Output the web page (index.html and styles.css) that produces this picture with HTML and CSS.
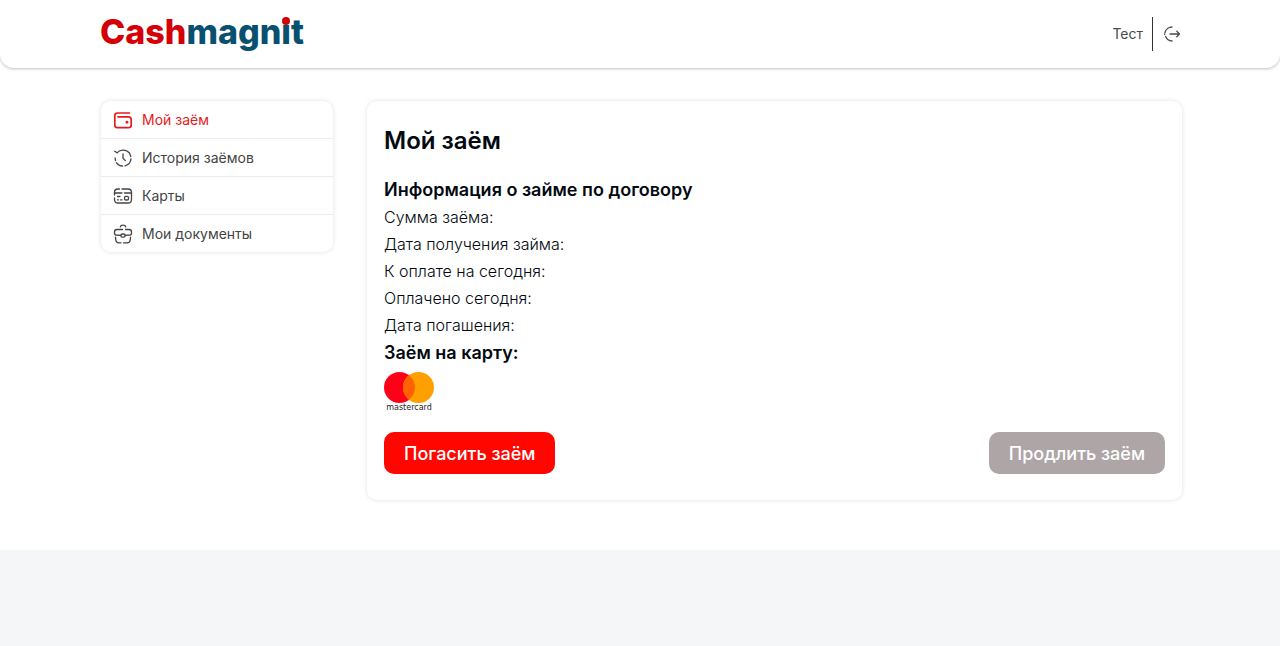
FILE: index.html
```html
<!DOCTYPE html>
<html lang="ru">
  <head>
    <meta charset="utf-8">
    <meta name="viewport" content="width=device-width, initial-scale=1">
    <title>Мой заём</title>
    <link rel="stylesheet" href="styles.css">
  </head>
  <body>
    <header class="header">
      <a class="logo" href="#"><span class="logo-red">Cash</span>magn<span class="logo-i">i</span>t</a>
      <div class="user">
        <span class="user-name">Тест</span>
        <a class="logout" href="#" aria-label="Выйти">
          <svg width="18" height="18" viewBox="0 0 18 18" fill="none" stroke="currentColor" stroke-width="1.3" stroke-linecap="round" stroke-linejoin="round">
            <path d="M7 9h9.500M13.800 6.300l2.700 2.700-2.700 2.700" />
            <path d="M9 2C6 2 2.800 4 2 7.500M2.600 11.500C3.800 14.300 6 15.800 9 16M1.700 9v.5" />
          </svg>
        </a>
      </div>
    </header>

    <main class="content">
      <nav class="menu">
        <a class="menu-item active" href="#">
          <svg width="20" height="20" viewBox="0 0 20 20" fill="none" stroke="currentColor" stroke-width="1.7" stroke-linecap="round" stroke-linejoin="round">
            <path d="M16.500 3H4.500C2.700 3 1.800 4 1.800 5.500v9.500c0 1.700 1 2.700 2.700 2.700h11c1.700 0 2.700-1 2.700-2.700V9.500c0-1.700-1-2.700-2.700-2.700H5" />
            <circle cx="14" cy="12.200" r="0.600" fill="currentColor" />
          </svg>
          Мой заём
        </a>
        <a class="menu-item" href="#">
          <svg width="20" height="20" viewBox="0 0 20 20" fill="none" stroke="currentColor" stroke-width="1.3" stroke-linecap="round" stroke-linejoin="round">
            <path d="M4.200 4.600A8 8 0 0 1 17.800 8.500M18 10.800A8 8 0 0 1 12 17.800M9.500 18A8 8 0 0 1 3.500 14.800M2.500 12.500L2.100 10" />
            <path d="M1.700 3.300l2.300 1.500M10 6v4.300l2.300 2.300" />
          </svg>
          История заёмов
        </a>
        <a class="menu-item" href="#">
          <svg width="20" height="20" viewBox="0 0 20 20" fill="none" stroke="currentColor" stroke-width="1.3" stroke-linecap="round" stroke-linejoin="round">
            <path d="M1.500 9V6.500C1.500 4 3 3 5 3h1.500M9 3h6c2 0 3.500 1 3.500 3.500v7c0 2.500-1.500 3.500-3.500 3.500H5c-2 0-3.500-1-3.500-3.500V12" />
            <path d="M1.500 7h7.500M11.500 7h7M4.500 10.500h2.500M4.500 13.800h1M7.500 13.800h1.500" />
            <rect x="11.500" y="10.300" width="4" height="3.700" rx="1.300" />
          </svg>
          Карты
        </a>
        <a class="menu-item" href="#">
          <svg width="20" height="20" viewBox="0 0 20 20" fill="none" stroke="currentColor" stroke-width="1.3" stroke-linecap="round" stroke-linejoin="round">
            <path d="M7.300 2.800C7.500 1.600 8.500 1.200 10 1.200s2.500.4 2.700 1.600" />
            <path d="M9.500 5.500H4C2.300 5.500 1.500 6.300 1.500 7.800v1.400c0 1 .5 1.600 1.500 1.800l4.800.4M12.200 11.400l4.800-.4c1-.2 1.500-.8 1.500-1.800V7.800c0-1.500-.8-2.300-2.500-2.300h-3.500" />
            <path d="M2.500 13.200l.3 2.800c.2 2 1.200 2.800 3.200 2.800h2M17.500 13.200l-.3 2.800c-.2 2-1.200 2.800-3.200 2.800h-3.500" />
            <rect x="7.800" y="10" width="4.400" height="3.200" rx="1.600" />
          </svg>
          Мои документы
        </a>
      </nav>

      <section class="card">
        <h1>Мой заём</h1>
        <h2>Информация о займе по договору</h2>
        <p>Сумма заёма:</p>
        <p>Дата получения займа:</p>
        <p>К оплате на сегодня:</p>
        <p>Оплачено сегодня:</p>
        <p>Дата погашения:</p>
        <h2>Заём на карту:</h2>
        <svg class="mastercard" width="50" height="40" viewBox="0 0 50 40" role="img" aria-label="mastercard">
          <circle cx="15.500" cy="15.500" r="15.500" fill="#ff0019" />
          <circle cx="34.500" cy="15.500" r="15.500" fill="#ff9f00" />
          <path d="M25 3.250a15.500 15.500 0 0 1 0 24.500a15.500 15.500 0 0 1 0-24.500z" fill="#ff6200" />
          <text class="mastercard-text" x="25" y="38" text-anchor="middle">mastercard</text>
        </svg>
        <div class="buttons">
          <button class="btn" type="button">Погасить заём</button>
          <button class="btn btn-gray" type="button">Продлить заём</button>
        </div>
      </section>
    </main>

    <footer class="footer"></footer>
  </body>
</html>
```

FILE: styles.css
```css
* {
  box-sizing: border-box;
}
body {
  margin: 0;
  min-height: 100vh;
  display: flex;
  flex-direction: column;
  font-family: Inter, "Open Sans", sans-serif;
  color: #02090f;
  background: #fff;
}
a {
  color: inherit;
  text-decoration: none;
}
.header {
  display: flex;
  justify-content: space-between;
  align-items: center;
  padding: 12px 99px 12px 100px;
  border-radius: 0 0 14px 14px;
  background: #fff;
  box-shadow: 0 1px 3px rgba(0, 0, 0, 0.25);
}
.logo {
  padding-bottom: 4px;
  font-size: 34px;
  line-height: 40px;
  font-weight: 800;
  color: #07506f;
}
.logo-red {
  color: #d50007;
}
/* red dot over the letter i */
.logo-i {
  position: relative;
}
.logo-i::before {
  content: "";
  position: absolute;
  left: 1px;
  top: 6px;
  width: 8px;
  height: 8px;
  border-radius: 50%;
  background: #d50007;
}
.user {
  display: flex;
  align-items: center;
  font-size: 14px;
  color: #4a4a4a;
}
.user-name {
  line-height: 34px;
  padding-right: 9px;
  border-right: 1px solid #333;
}
.logout {
  display: flex;
  padding-left: 10px;
}
.content {
  display: grid;
  grid-template-columns: 232px 1fr;
  align-items: start;
  gap: 34px;
  padding: 33px 98px 50px 101px;
}
.menu {
  border-radius: 10px;
  box-shadow: 0 0 5px rgba(0, 0, 0, 0.12);
}
.menu-item {
  display: flex;
  align-items: center;
  gap: 9px;
  height: 38px;
  padding: 0 12px;
  font-size: 14px;
  font-weight: 400;
  color: #444;
  border-bottom: 1px solid #ececec;
}
.menu-item:last-child {
  height: 37px;
  border-bottom: none;
}
.menu-item.active {
  color: #e8191c;
}
.card {
  padding: 25px 17px 26px;
  border-radius: 10px;
  box-shadow: 0 0 5px rgba(0, 0, 0, 0.12);
}
h1 {
  margin: 0 0 20px;
  font-size: 24px;
  line-height: 30px;
  font-weight: 600;
}
h2 {
  margin: 0;
  font-size: 18px;
  line-height: 28px;
  font-weight: 600;
}
p {
  margin: 0;
  font-size: 16px;
  line-height: 27px;
  font-weight: 300;
}
.mastercard {
  display: block;
  margin-top: 5px;
}
.mastercard-text {
  font-family: "DejaVu Sans", sans-serif;
  font-size: 8px;
  fill: #222;
}
.buttons {
  display: flex;
  justify-content: space-between;
  margin-top: 20px;
}
.btn {
  height: 42px;
  padding: 0 20px;
  border: none;
  border-radius: 10px;
  font-family: inherit;
  font-size: 18px;
  font-weight: 500;
  color: #fff;
  background: #ff0600;
  cursor: pointer;
}
.btn-gray {
  background: #aea5a7;
}
.footer {
  flex: 1;
  min-height: 96px;
  background: #f4f6f8;
}
```
